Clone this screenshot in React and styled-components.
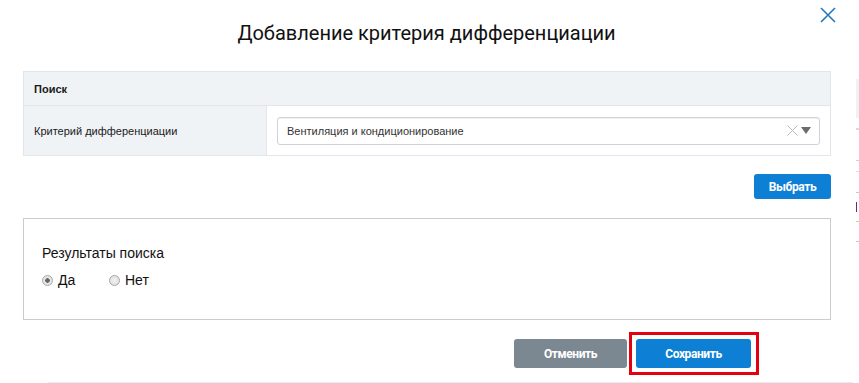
import React from 'react';
import styled, { createGlobalStyle } from 'styled-components';

const GlobalStyle = createGlobalStyle`
  html, body {
    margin: 0;
    padding: 0;
    background: #fff;
  }
  body {
    font-family: "Liberation Sans", Arial, sans-serif;
    color: #222;
  }
`;

const Page = styled.div`
  display: flex;
  width: 859px;
  height: 383px;
  overflow: hidden;
`;

const Modal = styled.div`
  position: relative;
  width: 853px;
  flex: none;
  display: flex;
  flex-direction: column;
  background: #fff;
`;

const Header = styled.div`
  padding-top: 18px;
  height: 53px;
  text-align: center;
`;

const Title = styled.h2`
  margin: 0;
  font-family: Roboto, "Noto Sans", sans-serif;
  font-weight: 400;
  font-size: 20px;
  line-height: 30px;
  color: #111;
`;

const CloseButton = styled.button`
  position: absolute;
  top: 6px;
  right: 16px;
  width: 18px;
  height: 18px;
  padding: 0;
  border: 0;
  background: none;
  cursor: pointer;
  display: flex;
  align-items: center;
  justify-content: center;
`;

const Body = styled.div`
  padding: 0 22px 0 23px;
  display: flex;
  flex-direction: column;
`;

const Table = styled.div`
  border: 1px solid #e1e6eb;
  display: grid;
  grid-template-columns: 243px 1fr;
`;

const HeadCell = styled.div`
  grid-column: 1 / -1;
  height: 33px;
  display: flex;
  align-items: center;
  padding-left: 10px;
  background: #f0f3f6;
  border-bottom: 1px solid #e1e6eb;
  font-size: 11px;
  font-weight: bold;
  color: #1a1a1a;
`;

const LabelCell = styled.div`
  height: 49px;
  display: flex;
  align-items: center;
  padding-left: 10px;
  background: #f0f3f6;
  border-right: 1px solid #e1e6eb;
  font-size: 11px;
  color: #1a1a1a;
`;

const ValueCell = styled.div`
  display: flex;
  align-items: center;
  padding: 0 10px;
`;

const Select = styled.div`
  flex: 1;
  height: 26px;
  border: 1px solid #cfd3d7;
  border-radius: 3px;
  box-shadow: inset 0 1px 1px rgba(0, 0, 0, 0.06);
  display: flex;
  align-items: center;
  padding: 0 8px 0 9px;
  font-size: 11px;
  color: #333;
`;

const SelectValue = styled.span`
  flex: 1;
`;

const SelectIcons = styled.span`
  display: flex;
  align-items: center;
  gap: 3px;
`;

const Actions = styled.div`
  display: flex;
  justify-content: flex-end;
  gap: 9px;
  margin-top: ${p => p.top || 0}px;
  padding-right: ${p => p.right || 0}px;
`;

const Button = styled.button`
  position: relative;
  height: ${p => p.tall ? 29 : 25}px;
  min-width: ${p => p.width}px;
  border: 0;
  border-radius: 3px;
  background: ${p => p.muted ? '#7b8791' : '#0d7fd5'};
  color: #fff;
  font-family: "Liberation Sans Narrow", "Roboto", sans-serif;
  font-weight: bold;
  font-size: 12px;
  letter-spacing: -0.4px;
  cursor: pointer;

  ${p => p.highlighted && `
    &::after {
      content: '';
      position: absolute;
      top: -7px;
      bottom: -7px;
      left: -7px;
      right: -8px;
      border: 3px solid #e4000f;
    }
  `}
`;

const ResultsBox = styled.div`
  margin-top: 19px;
  height: 100px;
  border: 1px solid #cccccc;
  padding: 0 18px;
`;

const ResultsTitle = styled.div`
  margin-top: 26px;
  font-size: 14px;
  color: #111;
`;

const RadioGroup = styled.div`
  display: flex;
  margin-top: 11px;
`;

const RadioLabel = styled.label`
  display: flex;
  align-items: center;
  width: 67px;
  font-size: 14px;
  color: #111;
`;

const RadioDot = styled.span`
  width: 9px;
  height: 9px;
  border-radius: 50%;
  border: 1px solid #a7a7a7;
  background: radial-gradient(circle, ${p => p.checked ? '#666 0 2px, #e6e6e6 2.5px' : '#f0f0f0 0, #dcdcdc 100%'});
  margin-right: 5px;
`;

const BottomRule = styled.div`
  margin-top: auto;
  margin-left: 48px;
  height: 1px;
  background: #e6ebf0;
`;

const Backdrop = styled.div`
  flex: 1;
  display: flex;
  flex-direction: column;
  padding-left: 3px;
`;

const BackBlock = styled.div`
  margin-top: ${p => p.top}px;
  height: ${p => p.h}px;
  background: ${p => p.color};
  width: ${p => p.w || 'auto'};
`;

export default function App() {
  return (
    <>
      <GlobalStyle />
      <Page>
        <Modal>
          <Header>
            <Title>Добавление критерия дифференциации</Title>
          </Header>
          <CloseButton aria-label="Закрыть">
            <svg width="16" height="16" viewBox="0 0 16 16">
              <path d="M1 1L15 15M15 1L1 15" stroke="#2378bd" strokeWidth="1.6" fill="none" />
            </svg>
          </CloseButton>
          <Body>
            <Table>
              <HeadCell>Поиск</HeadCell>
              <LabelCell>Критерий дифференциации</LabelCell>
              <ValueCell>
                <Select>
                  <SelectValue>Вентиляция и кондиционирование</SelectValue>
                  <SelectIcons>
                    <svg width="11" height="11" viewBox="0 0 11 11">
                      <path d="M0.5 0.5L10.5 10.5M10.5 0.5L0.5 10.5" stroke="#b4bcc6" strokeWidth="1" fill="none" />
                    </svg>
                    <svg width="10" height="7" viewBox="0 0 10 7">
                      <path d="M0 0H10L5 7Z" fill="#6c6c6c" />
                    </svg>
                  </SelectIcons>
                </Select>
              </ValueCell>
            </Table>
            <Actions top={18}>
              <Button width={77}>Выбрать</Button>
            </Actions>
            <ResultsBox>
              <ResultsTitle>Результаты поиска</ResultsTitle>
              <RadioGroup>
                <RadioLabel>
                  <RadioDot checked />
                  Да
                </RadioLabel>
                <RadioLabel>
                  <RadioDot />
                  Нет
                </RadioLabel>
              </RadioGroup>
            </ResultsBox>
            <Actions top={19} right={80}>
              <Button muted tall width={113}>Отменить</Button>
              <Button tall highlighted width={115}>Сохранить</Button>
            </Actions>
          </Body>
          <BottomRule />
        </Modal>
        <Backdrop>
          <BackBlock top={79} h={39} color="#eef2f6" />
          <BackBlock top={10} h={2} color="#d8d8d8" />
          <BackBlock top={30} h={1} color="#d0d0d0" />
          <BackBlock top={10} h={1} color="#e0e0e0" />
          <BackBlock top={20} h={1} color="#c8c8c8" />
          <BackBlock top={9} h={10} color="#6e2a6c" w="1px" />
          <BackBlock top={9} h={1} color="#c8c8c8" />
          <BackBlock top={19} h={1} color="#c8c8c8" />
        </Backdrop>
      </Page>
    </>
  );
}
